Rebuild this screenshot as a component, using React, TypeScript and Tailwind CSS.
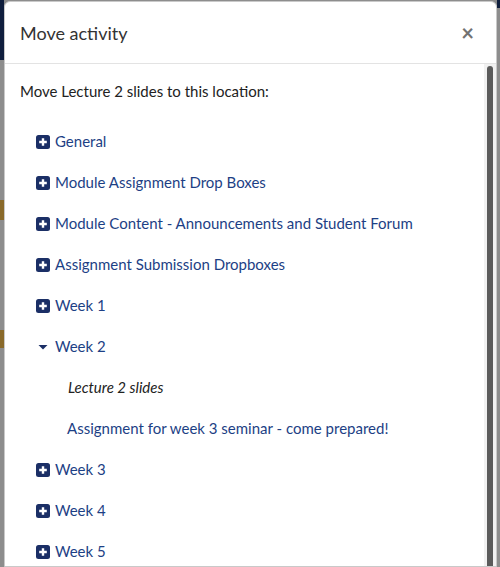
import React from 'react';

type Section = { name: string; open?: boolean; children?: { label: string; current?: boolean }[] };

const sections: Section[] = [
  { name: 'General' },
  { name: 'Module Assignment Drop Boxes' },
  { name: 'Module Content - Announcements and Student Forum' },
  { name: 'Assignment Submission Dropboxes' },
  { name: 'Week 1' },
  {
    name: 'Week 2',
    open: true,
    children: [
      { label: 'Lecture 2 slides', current: true },
      { label: 'Assignment for week 3 seminar - come prepared!' },
    ],
  },
  { name: 'Week 3' },
  { name: 'Week 4' },
  { name: 'Week 5' },
];

const PlusSquare = () => (
  <svg width="14" height="14" viewBox="0 0 14 14" className="shrink-0">
    <rect x="0" y="0" width="14" height="14" rx="2.5" fill="#1b2f66" />
    <path d="M7 3.2v7.6M3.2 7h7.6" stroke="#fff" strokeWidth="2.4" />
  </svg>
);

const Caret = () => (
  <svg width="14" height="14" viewBox="0 0 14 14" className="shrink-0">
    <path d="M2.5 5h9L7 9.5z" fill="#1b2f66" />
  </svg>
);

export default function App() {
  return (
    <div
      className="w-[500px] h-[567px] overflow-hidden flex bg-[#8d8d8d]"
      style={{ fontFamily: 'Lato, "Liberation Sans", sans-serif' }}
    >
      {/* dimmed page behind the dialog */}
      <div className="w-[4px] shrink-0 flex flex-col">
        <div className="h-[60px] bg-[#0f1e3d]" />
        <div className="h-[140px]" />
        <div className="h-[20px] bg-[#8a6a2a]" />
        <div className="h-[110px]" />
        <div className="h-[18px] bg-[#8a6a2a]" />
      </div>

      <div className="mt-[1px] w-[493px] shrink-0 bg-white rounded-t-[6px] border border-[#c9c9c9] flex flex-col">
        <div className="h-[62px] shrink-0 flex items-center justify-between pl-[15px] pr-[22px] border-b border-[#e3e3e3]">
          <h1 className="text-[18px] text-[#333] leading-none">Move activity</h1>
          <span className="text-[22px] font-bold text-[#727272] leading-none">×</span>
        </div>

        <div className="flex flex-1 min-h-0">
          <div className="flex-1 pl-[15px] pt-[16px]">
            <p className="text-[15px] text-[#222] leading-[22px]">Move Lecture 2 slides to this location:</p>
            <ul className="mt-[19px] pl-[16px] flex flex-col">
              {sections.map((s) => (
                <li key={s.name}>
                  <div className="h-[41px] flex items-center gap-[5px] text-[15px] text-[#1d3f85]">
                    {s.open ? <Caret /> : <PlusSquare />}
                    <span>{s.name}</span>
                  </div>
                  {s.children && (
                    <ul className="pl-[31px]">
                      {s.children.map((c) => (
                        <li
                          key={c.label}
                          className={`h-[41px] flex items-center text-[15px] ${
                            c.current ? 'italic text-[#222] pl-[1px]' : 'text-[#1d3f85]'
                          }`}
                        >
                          {c.label}
                        </li>
                      ))}
                    </ul>
                  )}
                </li>
              ))}
            </ul>
          </div>

          {/* scrollbar */}
          <div className="w-[12px] shrink-0 bg-[#f1f1f1] pt-[2px] flex justify-center">
            <div className="w-[6px] h-full rounded-t-full bg-[#5b5b5b]" />
          </div>
        </div>
      </div>

      <div className="flex-1 flex flex-col">
        <div className="h-[8px] bg-[#0f1e3d]" />
      </div>
    </div>
  );
}
